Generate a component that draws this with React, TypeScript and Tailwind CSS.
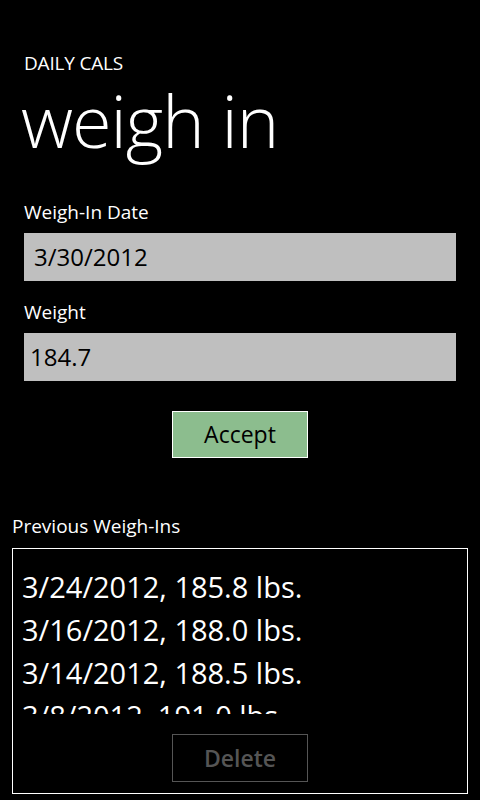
const history = [
  '3/24/2012, 185.8 lbs.',
  '3/16/2012, 188.0 lbs.',
  '3/14/2012, 188.5 lbs.',
  '3/8/2012, 191.0 lbs.',
]

export default function App() {
  return (
    <div
      className="w-[480px] h-[800px] bg-black text-white overflow-hidden"
      style={{ fontFamily: '"Open Sans", "Noto Sans", sans-serif' }}
    >
      {/* Title panel */}
      <div className="px-6 pt-[50px]">
        <p className="text-[19px] leading-[26px] tracking-[-0.2px]">DAILY CALS</p>
        <h1 className="text-[72px] leading-[76px] font-light tracking-[-1px] -ml-[3px] mt-[6px]">weigh in</h1>
      </div>

      {/* Form */}
      <div className="px-6 mt-[41px]">
        <label className="block text-[19px] leading-[26px]">Weigh-In Date</label>
        <div className="mt-[8px] h-[48px] bg-[#bfbfbf] text-black text-[24px] flex items-center px-[10px]">
          3/30/2012
        </div>
        <label className="block mt-[18px] text-[19px] leading-[26px]">Weight</label>
        <div className="mt-[8px] h-[48px] bg-[#bfbfbf] text-black text-[24px] flex items-center px-[6px]">
          184.7
        </div>
        <div className="flex justify-center mt-[30px]">
          <button className="w-[136px] h-[47px] bg-[#8cbd8e] border border-white text-black text-[23px] font-medium">
            Accept
          </button>
        </div>
      </div>

      {/* History */}
      <div className="px-3 mt-[55px]">
        <p className="text-[19px] leading-[26px]">Previous Weigh-Ins</p>
        <div className="mt-[9px] h-[246px] border border-white flex flex-col">
          <div className="h-[149px] overflow-hidden mt-[16px] px-[9px]">
            {history.map(h => (
              <p key={h} className="text-[29px] leading-[43px] whitespace-nowrap">{h}</p>
            ))}
          </div>
          <div className="flex justify-center mt-[20px]">
            <button className="w-[136px] h-[48px] border border-[#555] text-[#555] text-[23px] font-semibold">
              Delete
            </button>
          </div>
        </div>
      </div>
    </div>
  )
}
